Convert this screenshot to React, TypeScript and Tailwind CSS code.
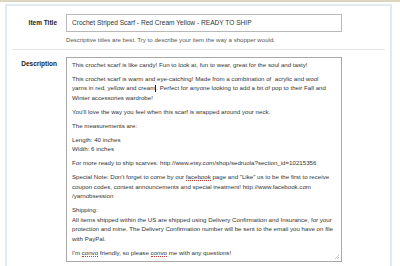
import React from 'react';

// Etsy-style listing editor: item title + description fields

const Misspelled = ({ children }: { children: React.ReactNode }) => (
  <span className="border-b border-dotted border-[#e0302c]">{children}</span>
);

export default function App() {
  return (
    <div className="w-[400px] h-[266px] overflow-hidden bg-white font-['Liberation_Sans',Arial,sans-serif] text-[#333]">
      <div className="h-[2px] bg-[#dcd5bf]" />

      <div className="ml-[5px] mt-[2px] w-[387px] h-[300px] border-x-[2px] border-t-[2px] border-[#e0ebf1] bg-white">
        {/* Item title */}
        <div className="flex pt-[8px]">
          <div className="w-[50px] pt-[5px] text-right text-[6.5px] font-bold leading-[8px] text-[#222]">
            Item Title
          </div>
          <div className="ml-[9px]">
            <div className="w-[276px] h-[18px] border border-[#b9b9b9] pl-[5px] text-[6.6px] leading-[16px] text-[#333]">
              Crochet Striped Scarf - Red Cream Yellow - READY TO SHIP
            </div>
            <p className="mt-[4px] text-[6.1px] leading-[8px] text-[#555]">
              Descriptive titles are best. Try to describe your item the way a shopper would.
            </p>
          </div>
        </div>

        <div className="mx-[5px] mt-[5px] h-px bg-[#e6e6e6]" />

        {/* Description */}
        <div className="flex pt-[7px]">
          <div className="w-[50px] pt-[3px] text-right text-[6.5px] font-bold leading-[8px] text-[#222]">
            Description
          </div>
          <div className="ml-[9px] relative w-[276px] h-[205px] border border-[#a8a8a8] pl-[5px] pr-[3px] pt-[2px] text-[6.15px] leading-[9.6px] text-[#333] flex flex-col gap-[4.3px]">
            <p>This crochet scarf is like candy! Fun to look at, fun to wear, great for the soul and tasty!</p>
            <p>
              This crochet scarf is warm and eye-catching! Made from a combination of&nbsp; acrylic and wool
              <br />
              yarns in red, yellow and cream
              <span className="inline-block w-px h-[7px] bg-[#222] align-middle" />. Perfect for anyone looking to
              add a bit of pop to their Fall and
              <br />
              Winter accessories wardrobe!
            </p>
            <p>You'll love the way you feel when this scarf is wrapped around your neck.</p>
            <p>The measurements are:</p>
            <p>
              Length: 40 inches
              <br />
              Width: 6 inches
            </p>
            <p>For more ready to ship scarves: http://www.etsy.com/shop/sedruola?section_id=10215356</p>
            <p>
              Special Note: Don't forget to come by our <Misspelled>facebook</Misspelled> page and "Like" us to be
              the first to receive
              <br />
              coupon codes, contest announcements and special treatment! http://www.facebook.com
              <br />
              /yarnobsession
            </p>
            <p>
              Shipping:
              <br />
              All items shipped within the US are shipped using Delivery Confirmation and Insurance, for your
              <br />
              protection and mine. The Delivery Confirmation number will be sent to the email you have on file
              <br />
              with PayPal.
            </p>
            <p>
              I'm <Misspelled>convo</Misspelled> friendly, so please <Misspelled>convo</Misspelled> me with any
              questions!
            </p>

            {/* resize grip */}
            <svg className="absolute right-[1px] bottom-[1px]" width="7" height="7" viewBox="0 0 7 7">
              <path d="M6 2 L2 6 M6 4 L4 6" stroke="#b5b5b5" strokeWidth="0.8" />
            </svg>
          </div>
        </div>
      </div>
    </div>
  );
}
